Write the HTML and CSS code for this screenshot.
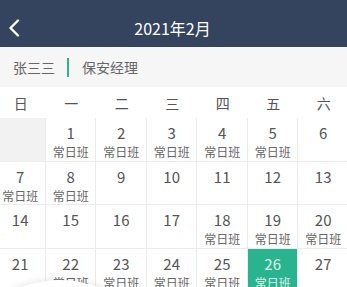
FILE: index.html
```
<!DOCTYPE html>
<html lang="zh-CN">

<head>
    <meta charset="UTF-8">
    <meta name="viewport" content="width=device-width, initial-scale=1.0">
    <title>排班日历</title>
    <link rel="stylesheet" href="styles.css">
</head>

<body>
    <div class="page">
        <div class="top-bar">
            <span class="back">
                <svg width="12" height="18" viewBox="0 0 12 18">
                    <polyline points="10,1.5 2.5,9 10,16.5" fill="none" stroke="#fff" stroke-width="2.4"
                        stroke-linecap="round" stroke-linejoin="round" />
                </svg>
            </span>
            <div class="title">2021年2月</div>
            <span class="spacer"></span>
        </div>

        <div class="info-bar">
            <span class="name">张三三</span>
            <span class="divider"></span>
            <span class="role">保安经理</span>
        </div>

        <div class="week-row">
            <div>日</div>
            <div>一</div>
            <div>二</div>
            <div>三</div>
            <div>四</div>
            <div>五</div>
            <div>六</div>
        </div>

        <div class="day-grid">
            <div class="day empty"></div>
            <div class="day"><span class="num">1</span><span class="shift">常日班</span></div>
            <div class="day"><span class="num">2</span><span class="shift">常日班</span></div>
            <div class="day"><span class="num">3</span><span class="shift">常日班</span></div>
            <div class="day"><span class="num">4</span><span class="shift">常日班</span></div>
            <div class="day"><span class="num">5</span><span class="shift">常日班</span></div>
            <div class="day"><span class="num">6</span></div>

            <div class="day"><span class="num">7</span><span class="shift">常日班</span></div>
            <div class="day"><span class="num">8</span><span class="shift">常日班</span></div>
            <div class="day"><span class="num">9</span></div>
            <div class="day"><span class="num">10</span></div>
            <div class="day"><span class="num">11</span></div>
            <div class="day"><span class="num">12</span></div>
            <div class="day"><span class="num">13</span></div>

            <div class="day"><span class="num">14</span></div>
            <div class="day"><span class="num">15</span></div>
            <div class="day"><span class="num">16</span></div>
            <div class="day"><span class="num">17</span></div>
            <div class="day"><span class="num">18</span><span class="shift">常日班</span></div>
            <div class="day"><span class="num">19</span><span class="shift">常日班</span></div>
            <div class="day"><span class="num">20</span><span class="shift">常日班</span></div>

            <div class="day"><span class="num">21</span></div>
            <div class="day"><span class="num">22</span><span class="shift">常日班</span></div>
            <div class="day"><span class="num">23</span><span class="shift">常日班</span></div>
            <div class="day"><span class="num">24</span><span class="shift">常日班</span></div>
            <div class="day"><span class="num">25</span><span class="shift">常日班</span></div>
            <div class="day today"><span class="num">26</span><span class="shift">常日班</span></div>
            <div class="day"><span class="num">27</span></div>

            <div class="day"><span class="num">28</span></div>
        </div>

        <div class="float-bubble"></div>
    </div>
</body>

</html>
```

FILE: styles.css
```
html,
body {
    margin: 0;
    padding: 0;
}

body {
    font-family: "Noto Sans CJK SC", "Noto Sans", sans-serif;
    background: #fff;
    color: #555;
    width: 347px;
    height: 287px;
    overflow: hidden;
}

.page {
    position: relative;
    width: 347px;
    height: 287px;
    overflow: hidden;
}

.top-bar {
    height: 39px;
    padding-top: 8px;
    background: #34435e;
    display: flex;
    align-items: center;
    color: #fff;
}

.back {
    width: 30px;
    display: flex;
    justify-content: flex-start;
    padding-left: 8px;
    box-sizing: border-box;
}

.title {
    flex: 1;
    text-align: center;
    font-size: 16px;
    padding-right: 2px;
}

.spacer {
    width: 30px;
}

.info-bar {
    height: 40px;
    background: #f6f6f6;
    display: flex;
    align-items: center;
    padding-left: 13px;
    font-size: 14px;
    color: #666;
}

.divider {
    width: 2px;
    height: 19px;
    background: #2bb592;
    margin: 0 13px 0 12px;
}

.week-row {
    display: grid;
    grid-template-columns: repeat(7, 50.5px);
    margin-left: -4.6px;
    height: 31px;
    align-items: center;
    text-align: center;
    font-size: 14px;
    color: #555;
}

.day-grid {
    display: grid;
    grid-template-columns: repeat(7, 49.5px);
    grid-auto-rows: 42.7px;
    gap: 1px;
    margin-left: -4.6px;
    background: #ececec;
    width: 352.5px;
}

.day {
    background: #fff;
    display: flex;
    flex-direction: column;
    align-items: center;
    padding-top: 6px;
    box-sizing: border-box;
}

.day.empty {
    background: #f2f2f2;
}

.num {
    font-size: 15px;
    line-height: 18px;
    color: #555;
}

.shift {
    font-size: 12px;
    line-height: 16px;
    margin-top: 2px;
    color: #666;
}

.day.today {
    background: #27b48f;
}

.day.today .num,
.day.today .shift {
    color: rgba(255, 255, 255, 0.88);
}

.float-bubble {
    position: absolute;
    left: -20px;
    top: 280px;
    width: 160px;
    height: 120px;
    border-radius: 50%;
    background: #fff;
    box-shadow: 0 0 10px rgba(0, 0, 0, 0.12);
}
```
